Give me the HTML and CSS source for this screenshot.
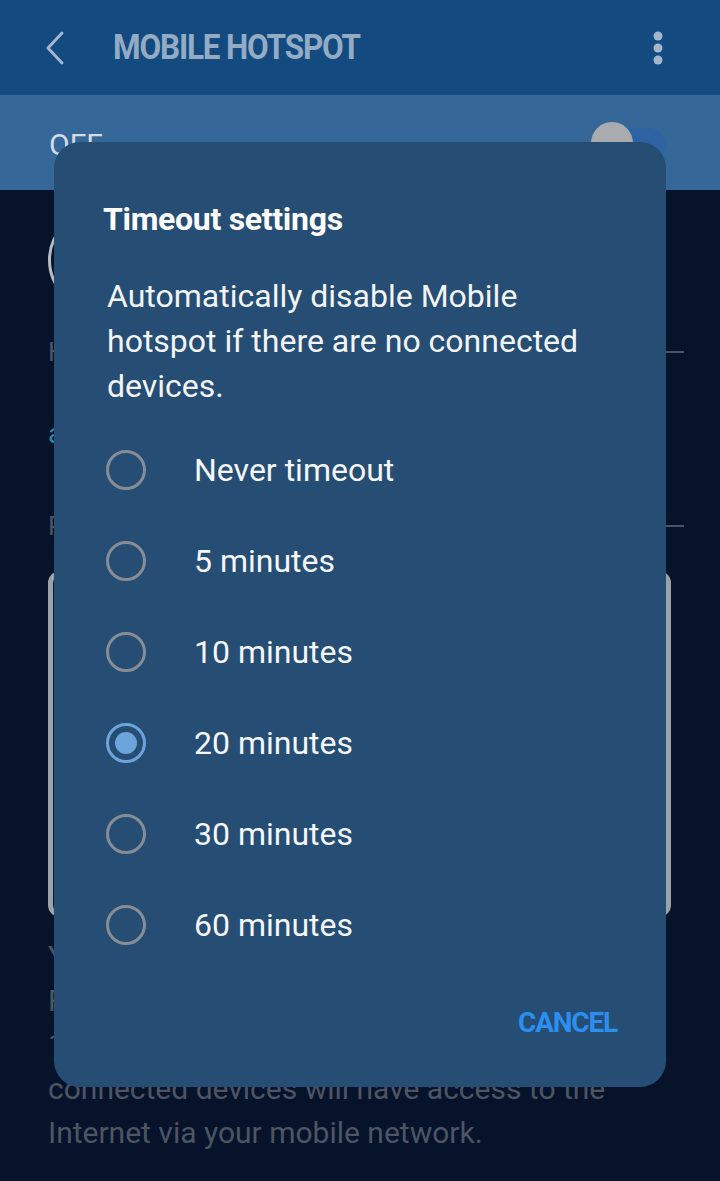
FILE: index.html
```html
<!DOCTYPE html>
<html lang="en">
<head>
    <meta charset="UTF-8">
    <meta name="viewport" content="width=device-width, initial-scale=1.0">
    <title>Mobile Hotspot</title>
    <link rel="stylesheet" href="styles.css">
</head>
<body>

    <div class="screen">
        <header class="appbar">
            <svg class="back" width="24" height="36" viewBox="0 0 24 36">
                <polyline points="19,3 5,18 19,33" fill="none" stroke="#a3b6cb" stroke-width="3" stroke-linecap="round" stroke-linejoin="round"/>
            </svg>
            <h1>MOBILE HOTSPOT</h1>
            <svg class="more" width="12" height="36" viewBox="0 0 12 36">
                <circle cx="6" cy="6" r="4.5" fill="#a3b6cb"/>
                <circle cx="6" cy="18" r="4.5" fill="#a3b6cb"/>
                <circle cx="6" cy="30" r="4.5" fill="#a3b6cb"/>
            </svg>
        </header>

        <div class="master">
            <span class="master-label">OFF</span>
            <div class="switch"><span class="knob"></span></div>
        </div>

        <main class="content">
            <div class="hero"><div class="hero-icon"></div></div>

            <div class="section-head"><span>Hotspot name</span><i></i></div>
            <div class="value">android_hotspot</div>

            <div class="section-head"><span>Password</span><i></i></div>
            <div class="card"></div>

            <p class="note">
                Your device will share its mobile<br>
                Face data connection with others.<br>
                1 Turn on Mobile hotspot so that<br>
                connected devices will have access to the<br>
                Internet via your mobile network.
            </p>
        </main>
    </div>

    <div class="dialog">
        <h2>Timeout settings</h2>
        <p class="dialog-text">Automatically disable Mobile hotspot if there are no connected devices.</p>

        <ul class="options">
            <li><span class="radio"></span>Never timeout</li>
            <li><span class="radio"></span>5 minutes</li>
            <li><span class="radio"></span>10 minutes</li>
            <li><span class="radio checked"></span>20 minutes</li>
            <li><span class="radio"></span>30 minutes</li>
            <li><span class="radio"></span>60 minutes</li>
        </ul>

        <div class="actions">
            <button type="button">CANCEL</button>
        </div>
    </div>

</body>
</html>
```

FILE: styles.css
```css
body {
    margin: 0;
    font-family: Roboto, "Noto Sans", sans-serif;
    background-color: #06132b;
}
.screen {
    width: 720px;
    height: 1181px;
    overflow: hidden;
    background-color: #06132b;
}
.appbar {
    height: 95px;
    background-color: #134a80;
    display: flex;
    align-items: center;
    padding: 0 56px 0 43px;
    box-sizing: border-box;
}
.appbar h1 {
    margin: 0 0 0 46px;
    flex: 1;
    font-size: 35px;
    font-weight: 700;
    color: #94abc4;
    letter-spacing: -1.3px;
    transform: scaleX(0.9);
    transform-origin: left center;
}
.master {
    height: 95px;
    background-color: #356898;
    display: flex;
    align-items: center;
    justify-content: space-between;
    padding: 0 55px 0 49px;
    box-sizing: border-box;
}
.master-label {
    font-size: 30px;
    color: #d3dbe4;
    margin-top: 4px;
}
.switch {
    width: 66px;
    height: 32px;
    border-radius: 16px;
    background-color: #2d62a3;
    position: relative;
    margin-top: 2px;
}
.knob {
    position: absolute;
    left: -8px;
    top: -6px;
    width: 42px;
    height: 42px;
    border-radius: 50%;
    background-color: #a9abae;
}
.content {
    padding: 0 36px 0 48px;
}
.hero {
    height: 135px;
    display: flex;
    align-items: center;
}
.hero-icon {
    width: 100px;
    height: 100px;
    border-radius: 50%;
    border: 3px solid #b9bdc3;
    box-sizing: border-box;
    margin-top: 5px;
}
.section-head {
    display: flex;
    align-items: center;
    height: 54px;
    font-size: 26px;
    color: #4c5462;
}
.section-head i {
    flex: 1;
    height: 2px;
    background-color: #4d5562;
    margin-left: 16px;
}
.value {
    height: 120px;
    line-height: 110px;
    font-size: 28px;
    color: #2a8c9c;
}
.card {
    margin: 18px 13px 0 0;
    height: 346px;
    border: 5px solid #9ca2aa;
    border-radius: 12px;
    box-sizing: border-box;
}
.note {
    margin: 18px 0 0;
    font-size: 30px;
    line-height: 44px;
    color: #4e5562;
    white-space: nowrap;
}
.dialog {
    position: absolute;
    left: 54px;
    top: 142px;
    width: 612px;
    height: 945px;
    box-sizing: border-box;
    padding: 57px 49px 0 49px;
    background-color: #264d73;
    border-radius: 26px;
}
.dialog h2 {
    margin: 0;
    font-size: 32px;
    line-height: 40px;
    font-weight: 700;
    color: #ffffff;
    letter-spacing: -0.3px;
}
.dialog-text {
    margin: 35px 0 0 4px;
    font-size: 32px;
    line-height: 45px;
    color: #f2f4f7;
}
.options {
    list-style: none;
    margin: 15px 0 0;
    padding: 0;
}
.options li {
    height: 91px;
    display: flex;
    align-items: center;
    font-size: 32px;
    color: #f4f6f9;
}
.radio {
    width: 40px;
    height: 40px;
    border-radius: 50%;
    border: 3px solid #878d95;
    box-sizing: border-box;
    margin: 0 48px 0 3px;
    display: flex;
    align-items: center;
    justify-content: center;
}
.radio.checked {
    border-color: #6ea4dc;
}
.radio.checked::after {
    content: "";
    width: 22px;
    height: 22px;
    border-radius: 50%;
    background-color: #6ea4dc;
}
.actions {
    display: flex;
    justify-content: flex-end;
    margin-top: 22px;
}
button {
    background: none;
    border: none;
    padding: 0;
    height: 60px;
    font-family: Roboto, sans-serif;
    font-size: 28px;
    font-weight: 700;
    color: #2a8ff0;
    letter-spacing: -1.2px;
}
```
